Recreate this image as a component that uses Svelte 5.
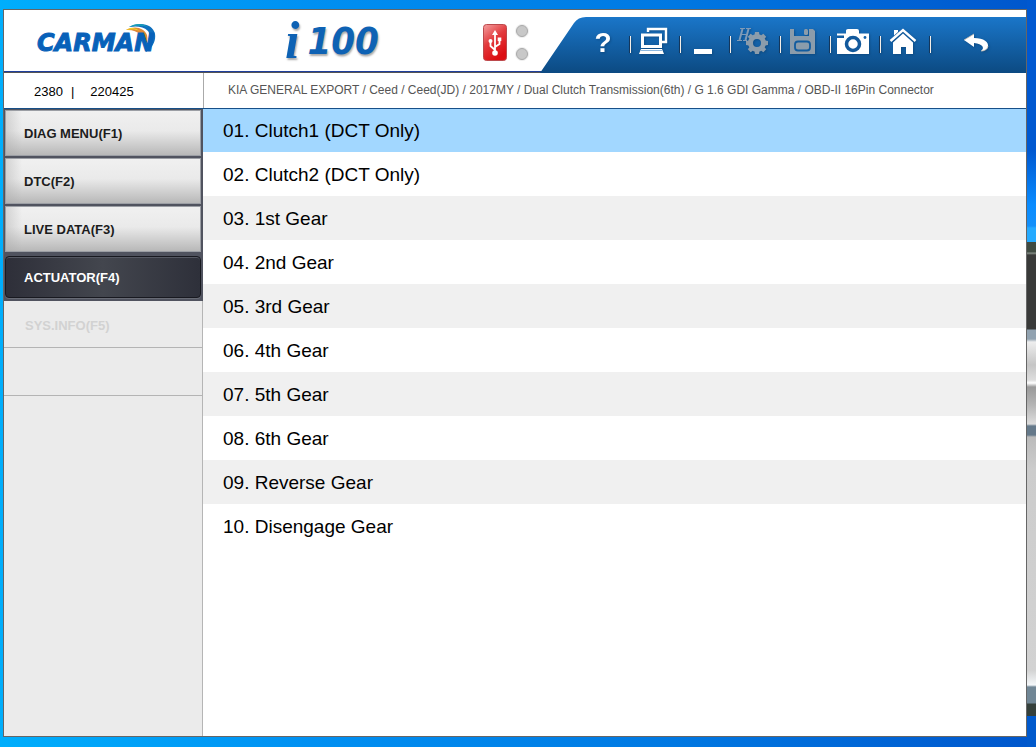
<script>
  const steps = ['KIA GENERAL EXPORT', 'Ceed', 'Ceed(JD)', '2017MY', 'Dual Clutch Transmission(6th)', 'G 1.6 GDI Gamma', 'OBD-II 16Pin Connector'];
  const menu = ['DIAG MENU(F1)', 'DTC(F2)', 'LIVE DATA(F3)', 'ACTUATOR(F4)'];
  const items = [
    '01. Clutch1 (DCT Only)',
    '02. Clutch2 (DCT Only)',
    '03. 1st Gear',
    '04. 2nd Gear',
    '05. 3rd Gear',
    '06. 4th Gear',
    '07. 5th Gear',
    '08. 6th Gear',
    '09. Reverse Gear',
    '10. Disengage Gear'
  ];
  const teeth = [0, 45, 90, 135, 180, 225, 270, 315];
  let active = $state(3);
  let selected = $state(0);
</script>

<div class="desktop">
  <main class="window">
    <header class="top">
      <div class="brand">
        <svg class="swoosh" width="32" height="30" viewBox="0 0 32 30" aria-hidden="true">
          <path d="M3 4C14-2 27 1 29 11C30 18 27 24 20 29L19 26C23 21 26 14 22 8C17 3 10 3 3 4Z" fill="#0f6fbe" />
          <path d="M3 4C9 0 17 0 22 4C16 2 10 3 3 4Z" fill="#18a0b8" />
          <path d="M0 7C9 2 18 5 21 12C22 16 21 20 19 23C20 14 11 6 0 7Z" fill="#e08a38" />
          <path d="M0 7C5 4 10 5 14 8C9 6 5 6 0 7Z" fill="#f5e61c" />
        </svg>
        <span class="carman">CARMAN</span>
      </div>
      <div class="model"><span class="letter">i</span><span class="digits">100</span></div>
      <div class="link">
        <svg width="24" height="37" viewBox="0 0 24 37" role="img" aria-label="USB">
          <defs>
            <linearGradient id="usb" x1="0" y1="0" x2="0.5" y2="1">
              <stop offset="0" stop-color="#f4a0a0" />
              <stop offset="0.5" stop-color="#e23a3d" />
              <stop offset="1" stop-color="#dc0d12" />
            </linearGradient>
          </defs>
          <rect x="0.5" y="0.5" width="23" height="36" rx="3" fill="url(#usb)" stroke="#bc4a4d" />
          <path d="M12 29V10M12 26L7.500 22V17M12 23L16.500 20V15" fill="none" stroke="#fff" stroke-width="1.8" />
          <path d="M12 6L15 11H9Z" fill="#fff" />
          <circle cx="12" cy="29" r="2.8" fill="#fff" />
          <circle cx="7.5" cy="17" r="2" fill="#fff" />
          <rect x="14.7" y="13.500" width="3.600" height="3.600" fill="#fff" />
        </svg>
        <div class="leds"><i></i><i></i></div>
      </div>
      <nav class="tools">
        <svg class="slant" width="46" height="56" viewBox="0 0 46 56" aria-hidden="true">
          <defs>
            <linearGradient id="bar" x1="0" y1="0" x2="0" y2="1">
              <stop offset="0" stop-color="#1a76c9" />
              <stop offset="1" stop-color="#0c4a82" />
            </linearGradient>
          </defs>
          <path d="M0 56L34 6Q38 0 46 0V56Z" fill="url(#bar)" />
        </svg>
        <div class="bar">
          <button aria-label="Help"><span class="q">?</span></button>
          <button aria-label="Windows">
            <svg width="30" height="30" viewBox="0 0 30 30">
              <path d="M10 6V3H28V16H24" fill="none" stroke="#fff" stroke-width="2.4" />
              <path d="M4.5 9H22.5V20.5H4.5Z" fill="none" stroke="#fff" stroke-width="3" />
              <path d="M3 23H24L26 28H1Z" fill="#fff" />
              <path d="M3 24.5H24" stroke="#5b9ad2" stroke-width="0.7" />
            </svg>
          </button>
          <button aria-label="Minimize">
            <svg width="30" height="30" viewBox="0 0 30 30"><path d="M6 23H24V28H6Z" fill="#fff" /></svg>
          </button>
          <button aria-label="Hardware settings" disabled>
            <svg width="34" height="30" viewBox="0 0 34 30">
              <g fill="none" stroke="#7f9bb8">
                <path d="M6.500 3L3.500 14M12.500 3L9.500 14" stroke-width="2" />
                <path d="M5 8.500H11M4 2.500H9M10 2.500H15M1 14.500H6M7 14.500H11" stroke-width="1" />
              </g>
              <circle cx="21" cy="17" r="6.500" fill="none" stroke="#8b9cab" stroke-width="5" />
              {#each teeth as angle}
                <path d="M18.5 9L19 6H23L23.5 9Z" fill="#8b9cab" transform="rotate({angle} 21 17)" />
              {/each}
            </svg>
          </button>
          <button aria-label="Save" disabled>
            <svg width="30" height="30" viewBox="0 0 30 30">
              <path d="M2 3H6V10H21V3H25L27 5V28H2Z" fill="#8b9cab" />
              <rect x="16" y="3" width="4" height="6" rx="1.500" fill="#8b9cab" />
              <rect x="7" y="15.500" width="15" height="9" rx="3" fill="none" stroke="#125c9f" stroke-width="1.800" />
            </svg>
          </button>
          <button aria-label="Capture">
            <svg width="34" height="30" viewBox="0 0 34 30">
              <path d="M1 28V12H8V9.500H1V7.500H10V4.500Q10 3 12 3H21Q23 3 23 5V7.500H33V28Z" fill="#fff" />
              <circle cx="17" cy="18" r="6.500" fill="none" stroke="#12599c" stroke-width="3.500" />
              <path d="M1 11H7" stroke="#1462aa" stroke-width="1.500" />
              <circle cx="29" cy="11.500" r="1.400" fill="#1462aa" />
            </svg>
          </button>
          <button aria-label="Home">
            <svg width="30" height="30" viewBox="0 0 30 30">
              <path d="M5 16.500L15 7.500L25 16.500V28H18V21H13V28H5Z" fill="#fff" />
              <path d="M2.500 15L15 4L27.500 15" fill="none" stroke="#fff" stroke-width="2.400" />
              <path d="M6 4H10V6L6 9.500Z" fill="#fff" />
            </svg>
          </button>
          <button class="last" aria-label="Back">
            <svg width="28" height="24" viewBox="0 0 28 24">
              <path d="M2 9L12 3V7C22 7 27 11 26 16C25.500 18 23 20 19 20C23 17 21 13 12 12V16Z" fill="#fff" />
              <path d="M12 3L2 9M26 15C25 19 22 20 19 20" fill="none" stroke="#c8bcae" stroke-width="0.8" />
            </svg>
          </button>
        </div>
      </nav>
    </header>

    <div class="info">
      <div class="version"><span>2380</span><span>|</span><span>220425</span></div>
      <div class="path">{steps.join(' / ')}</div>
    </div>

    <div class="body">
      <nav class="side">
        {#each menu as label, n}
          <div class="slot"><button class:active={n === active} onclick={() => (active = n)}>{label}</button></div>
        {/each}
        <button class="off" disabled>SYS.INFO(F5)</button>
        <div class="off"></div>
      </nav>
      <div class="list">
        {#each items as item, n}
          <button class:selected={n === selected} onclick={() => (selected = n)}>{item}</button>
        {/each}
      </div>
    </div>
  </main>
  <div class="wallpaper" aria-hidden="true"></div>
</div>

<style>
  :global(body) {
    margin: 0;
  }
  * {
    box-sizing: border-box;
  }
  button {
    margin: 0;
    padding: 0;
    border: 0;
    background: none;
    font: inherit;
    color: inherit;
  }
  svg {
    display: block;
    flex: none;
  }
  .desktop {
    display: grid;
    grid-template-columns: minmax(0, 1fr) 9px;
    min-height: 100vh;
    background: linear-gradient(90deg, #00aefc, #0090f2 30%, #0078e2 65%, #0056cc);
    font-family: 'Liberation Sans', Arial, sans-serif;
  }
  .window {
    display: flex;
    flex-direction: column;
    margin: 9px 0 10px 3px;
    border: 1px solid #666;
    background: #fff;
  }
  .wallpaper {
    background: linear-gradient(
      180deg,
      #0058d0 0 150px,
      #0a8cff 205px,
      #1490fa 226px,
      #25aaff 228px 242px,
      #404b42 242px 252px,
      #8a938c 253px,
      #393a39 255px 329px,
      #91a2b0 330px 339px,
      #eee 342px,
      #c5c5c5 365px,
      #ddd 380px,
      #fff 383px,
      #999 387px,
      #b5b5b5 405px,
      #ddd 424px,
      #65798a 426px 435px,
      #bbb 437px,
      #ccc 470px,
      #d2d2d2 670px,
      #f5f8fa 685px,
      #708695 687px 703px,
      #35403b 704px 716px,
      #0059cc 716px
    );
  }
  .top {
    display: flex;
    height: 63px;
    border-bottom: 1px solid #555;
    box-shadow: inset 0 -1px #1f3f9c;
  }
  .brand {
    display: flex;
    align-items: center;
    position: relative;
    width: 281px;
    padding: 4px 0 0 33px;
    color: #0861b9;
    font: italic bold 24px/28px 'DejaVu Sans', sans-serif;
  }
  .carman {
    position: relative;
    -webkit-text-stroke: 1px #0861b9;
  }
  .swoosh {
    position: absolute;
    left: 122px;
    top: 13px;
  }
  .model {
    display: flex;
    align-items: center;
    gap: 8px;
    width: 198px;
    color: #0e62b4;
    text-shadow: 1px 2px 2px #aaa;
  }
  .letter {
    font: italic bold 52px/52px 'Liberation Serif', serif;
  }
  .digits {
    font: italic bold 38px/52px 'DejaVu Sans Condensed', 'DejaVu Sans', sans-serif;
  }
  .link {
    display: flex;
    gap: 9px;
    padding-top: 14px;
  }
  .leds {
    display: flex;
    flex-direction: column;
    gap: 11px;
    padding-top: 1px;
  }
  .leds i {
    width: 12px;
    height: 12px;
    border: 1px solid #aaa;
    border-radius: 50%;
    background: #c8c8c8;
    box-shadow: 0 0 0 1px #eee;
  }
  .tools {
    display: flex;
    height: 56px;
    margin: 7px 0 0 auto;
  }
  .bar {
    display: flex;
    background: linear-gradient(#1a76c9, #0c4a82);
  }
  .bar button {
    position: relative;
    display: flex;
    justify-content: center;
    width: 50px;
    padding: 9px 16px 0 0;
    filter: drop-shadow(1px 1px 1px #0a3c6a88);
  }
  .bar button:not(.last)::after {
    content: '';
    position: absolute;
    right: 5px;
    top: 19px;
    width: 1px;
    height: 17px;
    background: #f4eee8;
    box-shadow: -1px 0 #14375c;
  }
  .bar .last {
    width: 90px;
    padding: 14px 10px 0 0;
  }
  .q {
    font: bold 28px/34px 'Liberation Sans', Arial, sans-serif;
    color: #fff;
  }
  .info {
    display: flex;
    height: 36px;
    border-bottom: 1px solid #174f88;
  }
  .version {
    display: flex;
    align-items: center;
    gap: 8px;
    width: 200px;
    padding: 1px 0 0 30px;
    border-right: 1px solid #aaa;
    font-size: 13px;
    color: #000;
  }
  .version span:last-child {
    margin-left: 8px;
  }
  .path {
    padding-left: 24px;
    font-size: 12px;
    line-height: 34px;
    color: #555;
    white-space: nowrap;
  }
  .body {
    display: flex;
    flex: 1;
  }
  .side {
    width: 199px;
    border-right: 1px solid #b5b5b5;
    background: #ebebeb;
    font-size: 13px;
    font-weight: bold;
  }
  .slot {
    height: 48px;
    margin-right: -1px;
    padding: 1px 2px 1px 1px;
    background: #50535f;
  }
  .slot button {
    width: 100%;
    height: 46px;
    padding-left: 18px;
    border: 1px solid #9b9ea4;
    background:
      linear-gradient(90deg, #aaa6, transparent 16px),
      linear-gradient(#f0f0f0, #eaeaea 45%, #cfcfcf 75%, #b8b8b8);
    text-align: left;
    color: #1c1c1c;
  }
  .slot .active {
    height: 42px;
    margin-top: 2px;
    border-color: #181920;
    border-radius: 4px;
    background: linear-gradient(90deg, #2e2f39, #43464e 50%, #2e303a);
    box-shadow: 0 1px #686b75, inset 0 1px #555862;
    color: #fff;
  }
  .off {
    display: block;
    width: 100%;
    height: 47px;
    padding: 2px 0 0 21px;
    border-bottom: 1px solid #b4b4b4;
    text-align: left;
    color: #d2d2d2;
  }
  .off + .off {
    height: 48px;
  }
  .list {
    display: flex;
    flex: 1;
    flex-direction: column;
  }
  .list button {
    height: 44px;
    padding: 2px 0 0 20px;
    text-align: left;
    font-size: 19px;
    color: #000;
  }
  .list button:nth-child(odd) {
    background: #f0f0f0;
  }
  .list .selected:nth-child(n) {
    height: 43px;
    padding-top: 0;
    background: #a2d7ff;
  }
</style>
